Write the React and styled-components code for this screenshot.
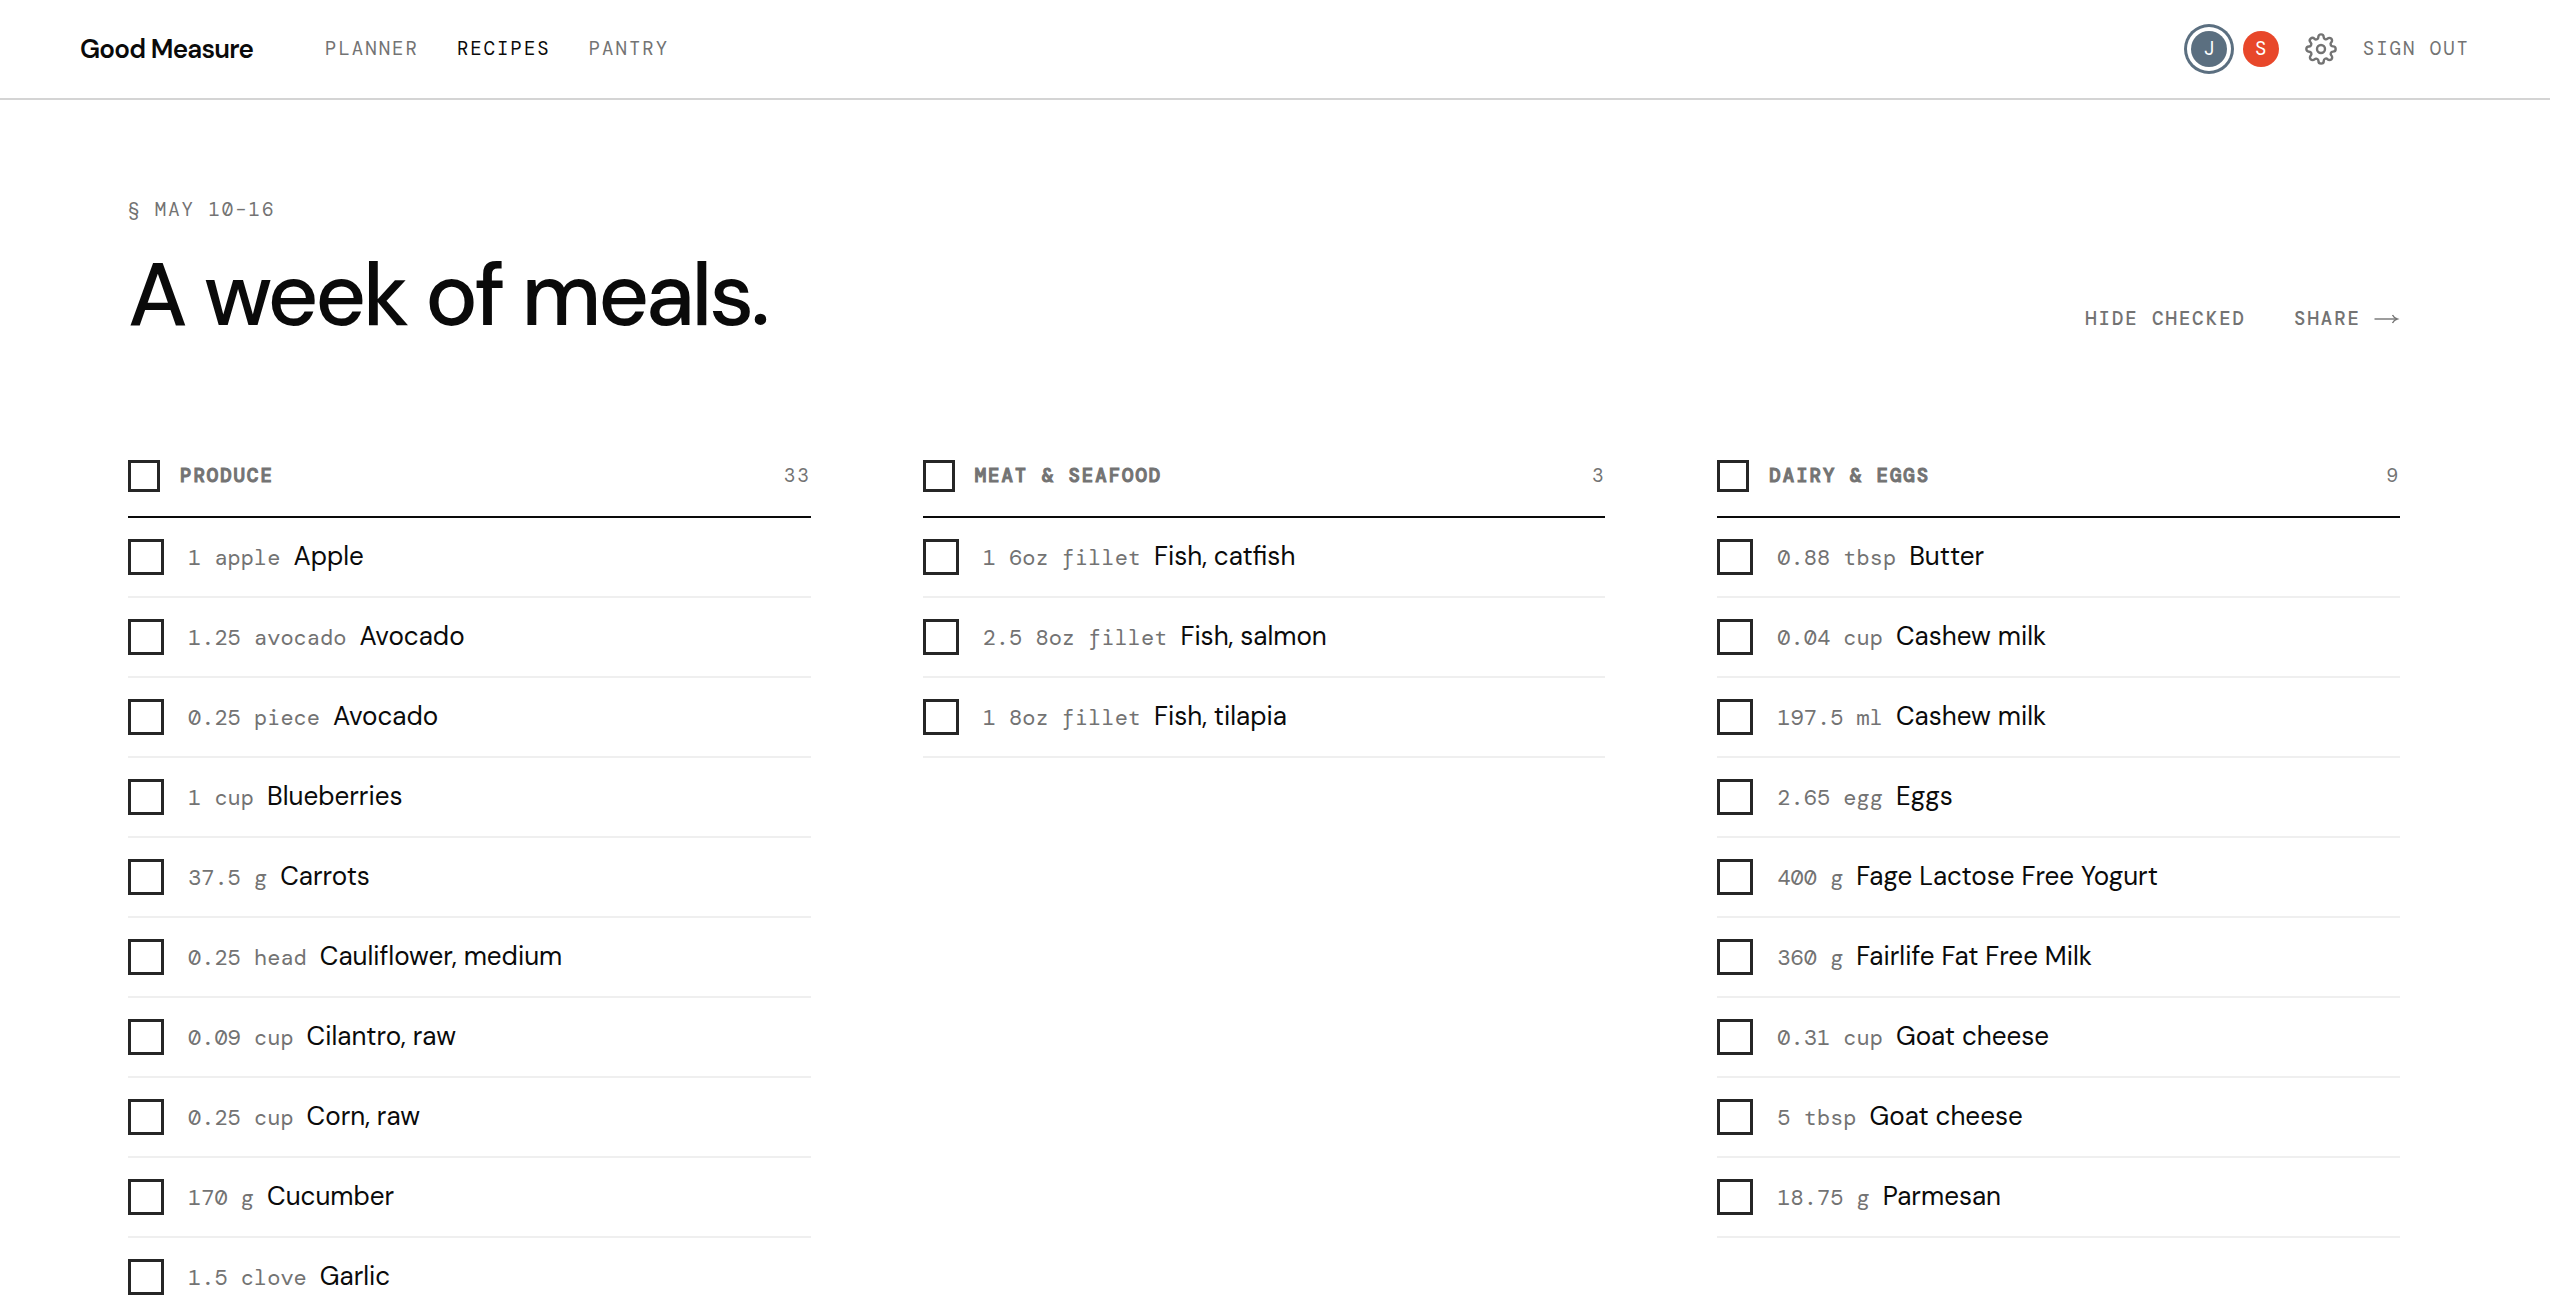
import React, { useState } from 'react';
import styled, { createGlobalStyle, css } from 'styled-components';

const colors = {
  ink: '#0a0a0a',
  box: '#262626',
  muted: '#737373',
  rule: '#d4d4d4',
  hairline: '#efefef',
  slate: '#5b6f80',
  tomato: '#e8472a',
};

const sans = "'DM Sans', Inter, 'Liberation Sans', sans-serif";
const mono = "'DM Mono', 'Liberation Mono', monospace";

const GlobalStyle = createGlobalStyle`
  *, *::before, *::after {
    box-sizing: border-box;
  }

  body {
    margin: 0;
    background: #fff;
    color: ${colors.ink};
    font-family: ${sans};
    -webkit-font-smoothing: antialiased;
  }

  h1, h2, p, ul {
    margin: 0;
    padding: 0;
  }
`;

const label = css`
  font-family: ${mono};
  font-size: 19px;
  font-weight: 400;
  line-height: 28px;
  letter-spacing: 2px;
  text-transform: uppercase;
`;

const TopBar = styled.header`
  display: flex;
  align-items: center;
  height: 100px;
  padding: 0 80px;
  border-bottom: 2px solid ${colors.rule};
`;

const Brand = styled.a`
  color: ${colors.ink};
  font-size: 26px;
  font-weight: 600;
  letter-spacing: -0.03em;
  text-decoration: none;
`;

const Nav = styled.nav`
  display: flex;
  gap: 38px;
  margin-left: 72px;
`;

const NavLink = styled.a`
  ${label}
  color: ${p => (p.$active ? colors.ink : colors.muted)};
  text-decoration: none;
`;

const Account = styled.div`
  display: flex;
  align-items: center;
  margin-left: auto;
`;

const Avatars = styled.div`
  display: flex;
  gap: 16px;
`;

const Avatar = styled.button`
  display: flex;
  align-items: center;
  justify-content: center;
  width: 36px;
  height: 36px;
  padding: 0;
  border: 0;
  border-radius: 50%;
  background: ${p => p.$color};
  color: #fff;
  font-family: ${mono};
  font-size: 19px;
  line-height: 28px;
  cursor: pointer;

  ${p =>
    p.$active &&
    css`
      box-shadow: 0 0 0 4px #fff, 0 0 0 7px ${p.$color};
    `}
`;

const IconButton = styled.button`
  display: flex;
  margin: 0 26px;
  padding: 0;
  border: 0;
  background: none;
  color: ${colors.muted};
  cursor: pointer;
`;

const TextButton = styled.button`
  ${label}
  display: flex;
  align-items: center;
  gap: 13px;
  padding: 0;
  border: 0;
  background: none;
  color: ${colors.muted};
  font-weight: ${p => (p.$strong ? 500 : 400)};
  cursor: pointer;
`;

const Main = styled.main`
  padding: 96px 150px 96px 128px;
`;

const PageHead = styled.div`
  display: flex;
  align-items: baseline;
  justify-content: space-between;
`;

const Eyebrow = styled.p`
  ${label}
  color: ${colors.muted};
`;

const Title = styled.h1`
  margin-top: 27px;
  font-size: 88px;
  font-weight: 500;
  line-height: 88px;
  letter-spacing: -0.037em;
`;

const Actions = styled.div`
  display: flex;
  gap: 48px;
`;

const Columns = styled.div`
  display: grid;
  grid-template-columns: repeat(3, 1fr);
  align-items: start;
  gap: 112px;
  margin-top: 121px;
`;

const SectionHead = styled.div`
  display: flex;
  align-items: center;
  gap: 20px;
  padding-bottom: 24px;
  border-bottom: 2px solid ${colors.ink};
`;

const SectionTitle = styled.h2`
  ${label}
  flex: 1;
  color: ${colors.muted};
  font-weight: 500;
  -webkit-text-stroke: 1px ${colors.muted};
`;

const Count = styled.span`
  ${label}
  color: ${colors.muted};
`;

const Checkbox = styled.input.attrs({ type: 'checkbox' })`
  appearance: none;
  flex: none;
  width: ${p => p.$size}px;
  height: ${p => p.$size}px;
  margin: 0;
  border: 3px solid ${colors.box};
  border-radius: 0;
  background: #fff;
  cursor: pointer;

  &:checked {
    background: ${colors.box};
  }
`;

const List = styled.ul`
  list-style: none;
`;

const Item = styled.li`
  border-bottom: 2px solid ${colors.hairline};
`;

const ItemLabel = styled.label`
  display: flex;
  align-items: center;
  gap: 24px;
  height: 78px;
  cursor: pointer;
`;

const ItemText = styled.span`
  display: flex;
  align-items: baseline;
  gap: 13px;
  font-size: 26px;
  line-height: 36px;
`;

const Amount = styled.span`
  color: ${colors.muted};
  font-family: ${mono};
  font-size: 22px;
`;

const sections = [
  {
    title: 'Produce',
    count: 33,
    items: [
      ['1 apple', 'Apple'],
      ['1.25 avocado', 'Avocado'],
      ['0.25 piece', 'Avocado'],
      ['1 cup', 'Blueberries'],
      ['37.5 g', 'Carrots'],
      ['0.25 head', 'Cauliflower, medium'],
      ['0.09 cup', 'Cilantro, raw'],
      ['0.25 cup', 'Corn, raw'],
      ['170 g', 'Cucumber'],
      ['1.5 clove', 'Garlic'],
    ],
  },
  {
    title: 'Meat & Seafood',
    count: 3,
    items: [
      ['1 6oz fillet', 'Fish, catfish'],
      ['2.5 8oz fillet', 'Fish, salmon'],
      ['1 8oz fillet', 'Fish, tilapia'],
    ],
  },
  {
    title: 'Dairy & Eggs',
    count: 9,
    items: [
      ['0.88 tbsp', 'Butter'],
      ['0.04 cup', 'Cashew milk'],
      ['197.5 ml', 'Cashew milk'],
      ['2.65 egg', 'Eggs'],
      ['400 g', 'Fage Lactose Free Yogurt'],
      ['360 g', 'Fairlife Fat Free Milk'],
      ['0.31 cup', 'Goat cheese'],
      ['5 tbsp', 'Goat cheese'],
      ['18.75 g', 'Parmesan'],
    ],
  },
];

const GearIcon = () => (
  <svg
    width="32"
    height="32"
    viewBox="0 0 24 24"
    fill="none"
    stroke="currentColor"
    strokeWidth="1.8"
    aria-hidden="true"
  >
    <circle cx="12" cy="12" r="3" />
    <path d="M19.4 15a1.65 1.65 0 0 0 .33 1.82l.06.06a2 2 0 1 1-2.83 2.83l-.06-.06a1.65 1.65 0 0 0-1.82-.33 1.65 1.65 0 0 0-1 1.51V21a2 2 0 0 1-4 0v-.09A1.65 1.65 0 0 0 9 19.4a1.65 1.65 0 0 0-1.82.33l-.06.06a2 2 0 1 1-2.83-2.83l.06-.06a1.65 1.65 0 0 0 .33-1.82 1.65 1.65 0 0 0-1.51-1H3a2 2 0 0 1 0-4h.09A1.65 1.65 0 0 0 4.6 9a1.65 1.65 0 0 0-.33-1.82l-.06-.06a2 2 0 1 1 2.83-2.83l.06.06a1.65 1.65 0 0 0 1.82.33H9a1.65 1.65 0 0 0 1-1.51V3a2 2 0 0 1 4 0v.09a1.65 1.65 0 0 0 1 1.51 1.65 1.65 0 0 0 1.82-.33l.06-.06a2 2 0 1 1 2.83 2.83l-.06.06a1.65 1.65 0 0 0-.33 1.82V9a1.65 1.65 0 0 0 1.51 1H21a2 2 0 0 1 0 4h-.09a1.65 1.65 0 0 0-1.51 1z" />
  </svg>
);

const ArrowIcon = () => (
  <svg
    width="26"
    height="12"
    viewBox="0 0 26 12"
    fill="none"
    stroke="currentColor"
    strokeWidth="1.4"
    aria-hidden="true"
  >
    <path d="M0.5 6H22" />
    <path d="M18.5 2Q20 5 23.2 6Q20 7 18.5 10" />
  </svg>
);

const ShoppingSection = ({ section, hideChecked }) => {
  const [checked, setChecked] = useState({});
  const allChecked = section.items.every((_, i) => checked[i]);

  const toggleAll = () => {
    setChecked(
      allChecked ? {} : Object.fromEntries(section.items.map((_, i) => [i, true]))
    );
  };

  return (
    <section>
      <SectionHead>
        <Checkbox
          $size={32}
          aria-label={`Check all ${section.title}`}
          checked={allChecked}
          onChange={toggleAll}
        />
        <SectionTitle>{section.title}</SectionTitle>
        <Count>{section.count}</Count>
      </SectionHead>

      <List>
        {section.items.map(([amount, name], i) =>
          hideChecked && checked[i] ? null : (
            <Item key={amount + name}>
              <ItemLabel>
                <Checkbox
                  $size={36}
                  checked={!!checked[i]}
                  onChange={() => setChecked({ ...checked, [i]: !checked[i] })}
                />
                <ItemText>
                  <Amount>{amount}</Amount>
                  <span>{name}</span>
                </ItemText>
              </ItemLabel>
            </Item>
          )
        )}
      </List>
    </section>
  );
};

const App = () => {
  const [hideChecked, setHideChecked] = useState(false);

  return (
    <>
      <GlobalStyle />

      <TopBar>
        <Brand href="#">Good Measure</Brand>
        <Nav>
          <NavLink href="#planner">Planner</NavLink>
          <NavLink href="#recipes" $active>
            Recipes
          </NavLink>
          <NavLink href="#pantry">Pantry</NavLink>
        </Nav>

        <Account>
          <Avatars>
            <Avatar $color={colors.slate} $active>
              J
            </Avatar>
            <Avatar $color={colors.tomato}>S</Avatar>
          </Avatars>
          <IconButton aria-label="Settings">
            <GearIcon />
          </IconButton>
          <TextButton>Sign out</TextButton>
        </Account>
      </TopBar>

      <Main>
        <Eyebrow>§ May 10–16</Eyebrow>
        <PageHead>
          <Title>A week of meals.</Title>
          <Actions>
            <TextButton $strong onClick={() => setHideChecked(!hideChecked)}>
              {hideChecked ? 'Show checked' : 'Hide checked'}
            </TextButton>
            <TextButton $strong>
              Share
              <ArrowIcon />
            </TextButton>
          </Actions>
        </PageHead>

        <Columns>
          {sections.map(section => (
            <ShoppingSection
              key={section.title}
              section={section}
              hideChecked={hideChecked}
            />
          ))}
        </Columns>
      </Main>
    </>
  );
};

export default App;
